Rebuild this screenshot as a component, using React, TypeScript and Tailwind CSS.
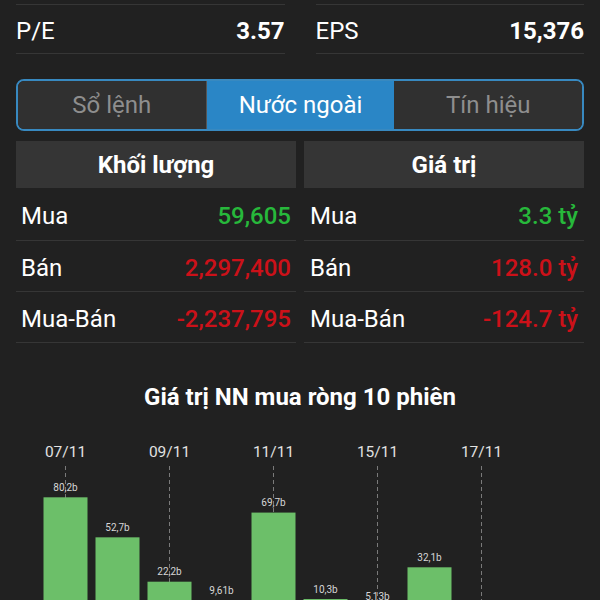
import React from "react";

const stats = [
  { label: "P/E", value: "3.57" },
  { label: "EPS", value: "15,376" },
];

const tabs = ["Sổ lệnh", "Nước ngoài", "Tín hiệu"];

type Row = { label: string; value: string; up: boolean };

const volumeRows: Row[] = [
  { label: "Mua", value: "59,605", up: true },
  { label: "Bán", value: "2,297,400", up: false },
  { label: "Mua-Bán", value: "-2,237,795", up: false },
];

const valueRows: Row[] = [
  { label: "Mua", value: "3.3 tỷ", up: true },
  { label: "Bán", value: "128.0 tỷ", up: false },
  { label: "Mua-Bán", value: "-124.7 tỷ", up: false },
];

const sessions = [
  { date: "07/11", value: 80.2, text: "80,2b" },
  { date: "08/11", value: 52.7, text: "52,7b" },
  { date: "09/11", value: 22.2, text: "22,2b" },
  { date: "10/11", value: 9.61, text: "9,61b" },
  { date: "11/11", value: 69.7, text: "69,7b" },
  { date: "14/11", value: 10.3, text: "10,3b" },
  { date: "15/11", value: 5.13, text: "5,13b" },
  { date: "16/11", value: 32.1, text: "32,1b" },
  { date: "17/11", value: -20, text: "" },
  { date: "18/11", value: -15, text: "" },
];

const BASE = 194; // baseline inside svg (page y 614)
const SCALE = 1.455;

function Chart() {
  return (
    <svg width="600" height="200" viewBox="0 0 600 200" className="block">
      {sessions.map((s, i) => {
        const cx = 65.5 + 52 * i;
        if (i % 2 !== 0) return null;
        return (
          <g key={s.date}>
            <text
              x={cx}
              y={37}
              textAnchor="middle"
              fontSize="15.5"
              fill="#e2e2e2"
              fontFamily="Roboto, sans-serif"
            >
              {s.date}
            </text>
            <line
              x1={cx}
              x2={cx}
              y1={46}
              y2={200}
              stroke="#7a7a7a"
              strokeWidth="1"
              strokeDasharray="4 3"
            />
          </g>
        );
      })}
      {sessions.map((s, i) => {
        if (s.value <= 0) return null;
        const cx = 65.5 + 52 * i;
        const h = s.value * SCALE;
        const top = BASE - h;
        return (
          <g key={s.date + "b"}>
            <rect x={cx - 22} y={top} width={44} height={h} fill="#6cbf69" />
            <text
              x={cx}
              y={top - 6.5}
              textAnchor="middle"
              fontSize="10"
              fill="#d6d6d6"
              fontFamily="Roboto, sans-serif"
            >
              {s.text}
            </text>
          </g>
        );
      })}
    </svg>
  );
}

function Table({ title, rows, pad }: { title: string; rows: Row[]; pad: string }) {
  return (
    <div className="flex flex-col">
      <div className="flex h-[47px] items-center justify-center bg-[#353535] text-[24px] font-bold text-white">
        {title}
      </div>
      {rows.map((r, i) => (
        <div
          key={r.label}
          className={`flex items-center justify-between border-b border-[#363636] pt-[3px] ${pad} ${
            i === 0 ? "h-[53px]" : "h-[51px]"
          }`}
        >
          <span className="text-[24px] leading-[30px] text-white">{r.label}</span>
          <span
            className={`text-[24px] leading-[30px] font-medium ${
              r.up ? "text-[#27b83b]" : "text-[#cc1119]"
            }`}
          >
            {r.value}
          </span>
        </div>
      ))}
    </div>
  );
}

export default function App() {
  return (
    <div className="h-[600px] w-[600px] overflow-hidden bg-[#212121] font-['Roboto',sans-serif]">
      <div className="grid grid-cols-2 gap-[31px] px-4 pt-1">
        {stats.map((s) => (
          <div
            key={s.label}
            className="flex h-[50px] items-center justify-between border-y border-[#363636] pt-[3px]"
          >
            <span className="text-[24px] leading-[30px] text-white">{s.label}</span>
            <span className="text-[24px] leading-[30px] font-bold text-white">{s.value}</span>
          </div>
        ))}
      </div>

      <div className="mx-4 mt-[25px] flex h-[52px] overflow-hidden rounded-lg border-2 border-[#3889c0]">
        {tabs.map((t, i) => (
          <div
            key={t}
            className={`flex flex-1 items-center justify-center text-[24px] ${
              i === 1
                ? "bg-[#2a86c6] text-white"
                : "bg-[#303030] text-[#8e8e8e]"
            } ${i === 0 ? "border-r border-[#555]" : ""}`}
          >
            {t}
          </div>
        ))}
      </div>

      <div className="mt-[10px] grid grid-cols-2 gap-2 px-4">
        <Table title="Khối lượng" rows={volumeRows} pad="pl-[5px] pr-[5px]" />
        <Table title="Giá trị" rows={valueRows} pad="pl-[6px] pr-[6px]" />
      </div>

      <div className="mt-[38px] text-center text-[24px] leading-[32px] font-bold text-white">
        Giá trị NN mua ròng 10 phiên
      </div>

      <div className="mt-[7px]">
        <Chart />
      </div>
    </div>
  );
}
